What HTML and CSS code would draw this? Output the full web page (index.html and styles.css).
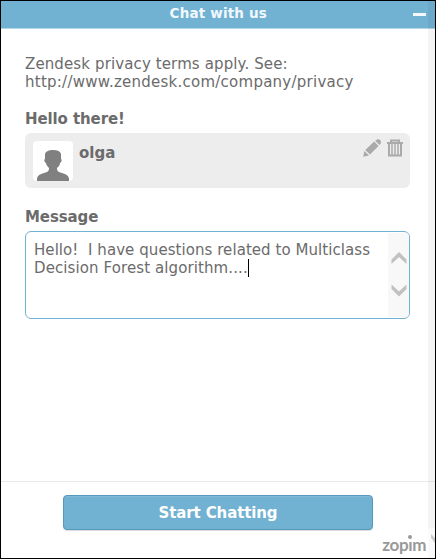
FILE: index.html
```html
<!DOCTYPE html>
<html lang="en">
<head>
<meta charset="utf-8">
<title>Chat with us</title>
<link rel="stylesheet" href="styles.css">
</head>
<body>
<div class="widget">
  <header class="header"><span class="title">Chat with us</span><i class="minimize"></i></header>
  <main class="content">
    <p class="terms">Zendesk privacy terms apply. See:<br><span class="url">http://www.zendesk.com/company/privacy</span></p>
    <h2 class="label greeting">Hello there!</h2>
    <section class="profile">
      <svg class="avatar" viewBox="0 0 40 40"><path fill="#808080" d="M4 40V38C4 35 7 33 11 32C15 31 16 30 16 27C14 25 13 23 13 22C11 21 11 18 12 18V13C13 10 16 9 20 9Q27 9 28 13V18C29 18 29 21 27 22C27 24 26 25 24 27C24 30 25 31 29 32C33 33 36 35 36 38V40Z"/></svg>
      <span class="name">olga</span>
      <span class="actions">
        <svg class="pencil" width="18" height="18" viewBox="0 0 18 18" fill="#aaa"><path d="M.2 17.8L1.4 12L6 16.6ZM2.3 11L11.2 2.6L15.6 7L7 15.6ZM12.2 1.8L14 .4Q16-.2 17.4 1.2Q18.6 3 17.4 4.9L16.4 6Z"/></svg>
        <svg class="trash" width="16" height="18" viewBox="0 0 16 18" fill="none" stroke="#aaa"><path stroke-width="2" d="M0 4H16M4 4V1.5H12V4M2 4V16.5H14V4"/><path stroke-width="1.5" d="M5 5V16M8 5V16M11 5V16"/></svg>
      </span>
    </section>
    <h2 class="label">Message</h2>
    <div class="message">
      <div class="text"><span class="line1">Hello!&nbsp; I have questions related to Multiclass</span><br><span class="line2">Decision Forest algorithm....</span><i class="caret"></i></div>
      <div class="scroller">
        <svg width="16" height="46" viewBox="0 0 16 46" fill="#c1c1c1"><path d="M.5 8.5L8 1L15.5 8.5V13L8 6L.5 13ZM.5 33.5L8 40.5L15.5 33.5V38L8 45.5L.5 38Z"/></svg>
      </div>
    </div>
  </main>
  <footer class="footer">
    <button class="start"><span>Start Chatting</span></button>
    <span class="brand">zop<span class="brand-i">ı<i class="dot"></i></span>m</span>
  </footer>
  <div class="rail"><svg width="7" height="30" viewBox="0 0 7 30"><path fill="#ccc" d="M3 6L7 10V15L3 10Z"/></svg></div>
</div>
</body>
</html>
```
FILE: styles.css
```css
* { box-sizing: border-box; }
body { margin: 0; font: 15px/18px "DejaVu Sans", sans-serif; color: #6b6b6b; }
.widget { position: relative; width: 436px; height: 559px; border: 1px solid #000; background: #fff; display: flex; flex-direction: column; overflow: hidden; }
.header { height: 28px; flex: none; background: #71b1d2; border-bottom: 1px solid #b1d4e6; color: #f1f8fc; font-size: 13.5px; font-weight: bold; line-height: 25px; display: flex; justify-content: flex-end; align-items: center; padding-right: 9px; }
.title { margin: -2px 146px 0 0; letter-spacing: .18px; white-space: nowrap; }
.minimize { width: 13px; height: 3px; background: #f4fafc; }
.content { flex: 1; padding: 26px 25px 0 24px; }
.terms { margin: 0; white-space: nowrap; letter-spacing: .12px; }
.url { letter-spacing: .25px; }
.label { margin: 0; font-size: 15px; line-height: 18px; font-weight: bold; letter-spacing: -.1px; }
.greeting { margin-top: 19px; }
.profile { width: 385px; height: 55px; margin: 5px 0 20px; padding: 8px 7px 0 8px; border-radius: 6px; background: #ededed; display: flex; align-items: flex-start; }
.avatar { width: 40px; height: 40px; border-radius: 4px; background: #fff; }
.name { font-weight: bold; margin: 3px 0 0 6px; }
.actions { margin: -2px 0 0 auto; display: flex; gap: 6px; }
.pencil { margin-left: -1px; }
.message { width: 385px; height: 88px; margin-top: 5px; border: 1px solid #71b1d2; border-radius: 6px; display: flex; overflow: hidden; white-space: nowrap; }
.text { flex: 1; padding: 9px 0 0 8px; }
.line1 { letter-spacing: .06px; }
.line2 { letter-spacing: .1px; }
.caret { display: inline-block; width: 1px; height: 18px; background: #000; vertical-align: -4px; }
.scroller { flex: none; width: 21px; margin: 1px 0; background: #f8f8f8; padding: 18px 0 0 3px; }
.footer { height: 77px; flex: none; border-top: 1px solid #e9e9e9; padding: 13px 6px 0 62px; display: flex; align-items: flex-start; justify-content: space-between; }
.start { width: 310px; height: 35px; padding: 0; border: 1px solid #5499b9; border-radius: 4px; background: #71b1d2; color: #fff; font: bold 15px/33px "DejaVu Sans", sans-serif; letter-spacing: -.12px; box-shadow: inset 0 1px #80bad7, 0 1px 1px #ddd; }
.start span { position: relative; top: 1px; }
.brand { font: bold 17px/20px Lato, sans-serif; letter-spacing: -.4px; color: #999; margin: 40px 3px 0 0; }
.brand-i { position: relative; }
.dot { position: absolute; left: 0; top: 1px; width: 4px; height: 4px; border-radius: 50%; background: #999; }
.rail { position: absolute; right: 0; top: 0; bottom: 0; width: 7px; background: linear-gradient(rgba(0,0,0,.045) 527px, rgba(0,0,0,.02) 527px); display: flex; align-items: flex-end; }
```
